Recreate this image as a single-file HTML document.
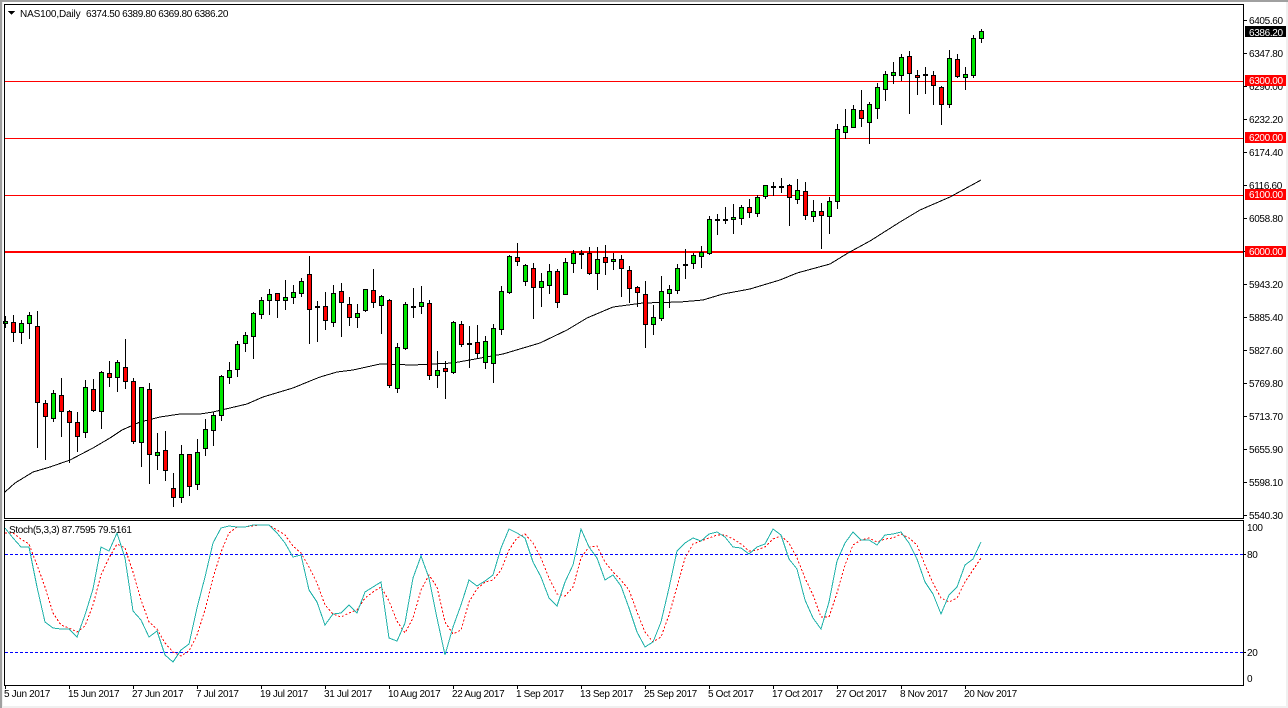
<!DOCTYPE html>
<html><head><meta charset="utf-8"><style>
html,body{margin:0;padding:0;width:1288px;height:708px;overflow:hidden;background:#f0f0f0}
svg{position:absolute;left:0;top:0;display:block}
text{font-family:"Liberation Sans",sans-serif;font-size:10px;letter-spacing:-.35px;fill:#000}
</style></head><body>
<svg id="s" width="1288" height="708" viewBox="0 0 1288 708" xmlns="http://www.w3.org/2000/svg">
<rect x="0" y="0" width="1288" height="708" fill="#f0f0f0"/>
<rect x="3" y="2" width="1283" height="704" fill="#fff"/>
<rect x="0" y="0" width="1288" height="2" fill="#a0a0a0"/>
<rect x="0" y="0" width="2" height="708" fill="#a0a0a0"/>
<g id="g" shape-rendering="crispEdges"></g>
<g shape-rendering="crispEdges">
<rect x="4.5" y="4.5" width="1239" height="514" fill="none" stroke="#000"/>
<rect x="4.5" y="520.5" width="1239" height="165" fill="none" stroke="#000"/>
<path stroke="#000" fill="none" d="M1244 20.5h3M1244 53.5h3M1244 86.5h3M1244 119.5h3M1244 152.5h3M1244 185.5h3M1244 218.5h3M1244 251.5h3M1244 284.5h3M1244 317.5h3M1244 350.5h3M1244 383.5h3M1244 416.5h3M1244 449.5h3M1244 482.5h3M1244 515.5h3M1244 554.5h2M1244 652.5h2M5.5 686v3M69.5 686v3M133.5 686v3M197.5 686v3M261.5 686v3M325.5 686v3M389.5 686v3M453.5 686v3M517.5 686v3M581.5 686v3M645.5 686v3M709.5 686v3M773.5 686v3M837.5 686v3M901.5 686v3M965.5 686v3"/>
<path fill="#000" d="M8 11h7l-3.500 4z"/>
<rect x="1245" y="26" width="41" height="11" fill="#000"/>
</g>
<g>
<text x="20" y="17" style="letter-spacing:-.15px">NAS100,Daily</text>
<text x="86" y="17">6374.50 6389.80 6369.80 6386.20</text>
<text x="9" y="533">Stoch(5,3,3) 87.7595 79.5161</text>
<text x="1249" y="24">6405.60</text>
<text x="1249" y="57">6347.80</text>
<text x="1249" y="90">6290.00</text>
<text x="1249" y="123">6232.20</text>
<text x="1249" y="156">6174.40</text>
<text x="1249" y="189">6116.60</text>
<text x="1249" y="222">6058.80</text>
<text x="1249" y="288">5943.20</text>
<text x="1249" y="321">5885.40</text>
<text x="1249" y="354">5827.60</text>
<text x="1249" y="387">5769.80</text>
<text x="1249" y="420">5713.70</text>
<text x="1249" y="453">5655.90</text>
<text x="1249" y="486">5598.10</text>
<text x="1249" y="519">5540.30</text>
</g>
<g>
<rect x="1245" y="75" width="41" height="11" fill="#f00"/>
<rect x="1245" y="132" width="41" height="11" fill="#f00"/>
<rect x="1245" y="189" width="41" height="11" fill="#f00"/>
<rect x="1245" y="246" width="41" height="11" fill="#f00"/>
<text x="1249" y="36" style="fill:#fff">6386.20</text>
<text x="1249" y="84" style="fill:#fff">6300.00</text>
<text x="1249" y="141" style="fill:#fff">6200.00</text>
<text x="1249" y="198" style="fill:#fff">6100.00</text>
<text x="1249" y="255" style="fill:#fff">6000.00</text>
<text x="1247" y="531">100</text>
<text x="1247" y="558">80</text>
<text x="1247" y="656">20</text>
<text x="1247" y="682">0</text>
<text x="4" y="697">5 Jun 2017</text>
<text x="68" y="697">15 Jun 2017</text>
<text x="132" y="697">27 Jun 2017</text>
<text x="196" y="697">7 Jul 2017</text>
<text x="260" y="697">19 Jul 2017</text>
<text x="324" y="697">31 Jul 2017</text>
<text x="388" y="697">10 Aug 2017</text>
<text x="452" y="697">22 Aug 2017</text>
<text x="516" y="697">1 Sep 2017</text>
<text x="580" y="697">13 Sep 2017</text>
<text x="644" y="697">25 Sep 2017</text>
<text x="708" y="697">5 Oct 2017</text>
<text x="772" y="697">17 Oct 2017</text>
<text x="836" y="697">27 Oct 2017</text>
<text x="900" y="697">8 Nov 2017</text>
<text x="964" y="697">20 Nov 2017</text>
</g>
</svg>
<script>
var c="316,327,321,323,g 315,341,322,332,r 320,343,323,332,g 312,338,315,323,g 311,447,326,402,r 400,459,403,416,r 390,421,393,418,g 378,436,395,411,r 410,462,411,422,r 412,451,422,436,r 380,437,387,432,g 379,411,389,410,r 371,428,372,411,g 361,386,373,377,r 360,391,362,377,g 339,388,367,381,r 378,443,381,441,r 387,466,387,442,g 383,483,389,454,r 433,469,452,455,g 431,480,450,470,r 473,506,488,497,r 445,502,454,497,g 454,495,454,486,r 439,489,452,484,g 419,455,429,448,g 412,445,415,430,g 375,420,376,415,g 362,383,370,377,g 341,376,344,369,g 332,351,335,343,g 312,358,313,336,g 297,318,300,314,g 289,314,294,300,g 293,317,293,300,r 280,309,297,300,g 285,303,292,297,g 278,296,281,293,g 256,343,274,309,r 301,341,306,306,d 292,329,306,320,r 285,326,293,322,g 283,336,291,302,r 297,325,304,317,r 304,327,313,317,g 289,311,289,310,g 269,307,290,302,r 295,333,296,305,g 299,387,300,385,r 343,392,347,388,g 302,349,304,348,g 288,317,306,306,d 286,313,302,306,g 300,379,303,375,r 351,387,370,375,g 361,398,368,371,r 321,373,322,372,g 321,346,324,344,r 326,367,343,343,d 325,358,342,353,r 336,368,341,362,g 324,382,328,363,g 286,334,291,329,g 255,293,256,292,g 243,265,257,261,r 264,285,265,281,g 263,318,268,287,r 273,306,281,287,g 264,293,271,285,g 269,307,271,302,r 258,294,262,294,g 250,272,253,263,g 250,268,253,253,d 247,274,253,273,r 247,289,259,273,g 245,274,257,262,r 253,269,259,261,g 255,296,259,268,r 266,302,270,288,r 286,306,287,292,r 281,347,294,324,r 305,334,317,324,g 276,320,291,318,g 285,307,289,293,g 264,293,268,290,g 249,278,264,264,d 253,268,255,263,g 246,267,252,256,g 216,254,219,253,g 214,234,219,219,d 207,223,219,219,d 204,233,217,219,g 205,224,207,218,g 199,217,207,212,r 195,216,197,213,g 185,198,185,196,g 182,195,186,186,d 178,192,186,186,d 184,225,185,197,r 179,203,190,199,g 182,219,191,215,r 200,221,211,216,g 203,248,211,215,r 197,233,201,216,g 124,208,129,201,g 109,138,126,132,g 105,127,109,127,g 90,126,110,118,r 102,143,104,122,g 83,118,87,108,g 71,100,74,89,g 62,83,72,75,g 54,80,57,75,g 51,113,56,73,r 70,94,75,77,r 67,93,74,75,d 71,104,75,85,r 86,124,87,104,r 50,107,58,104,g 54,77,59,76,r 67,89,74,77,g 35,77,38,75,g 29,42,31,38,g".split(" ");
var o="";
o+='<path fill="#f00" d="M5 251h1238v2H5zM5 138h1238v1H5zM5 81h1238v1H5zM5 195h1238v1H5z"/>';
o+='<path fill="none" stroke="#00f" stroke-dasharray="3 2" d="M5 554.500H1243M5 652.500H1243"/>';
var ma=[5,492,15,483,33,472,50,467,70,460,93,448,110,438,122,430,140,422,160,417,180,414,200,414,213,412,247,404,263,397,293,388,310,381,320,377,337,372,353,370,380,364,413,365,453,363,503,354,540,343,567,330,587,318,613,307,643,303,680,302,703,300,723,294,750,289,780,280,797,273,830,264,848,253,870,241,900,222,920,210,950,197,981,180];
o+='<polyline fill="none" stroke="#000" points="'+ma.join(" ")+'"/>';
c.forEach(function(s,i){
  var x=5+8*i,p=s.split(","),h=+p[0],l=+p[1],t=+p[2],b=+p[3],k=p[4];
  o+='<path stroke="#000" d="M'+(x+.5)+' '+h+'V'+(l+1)+'"/>';
  if(k=="d"){o+='<rect x="'+(x-2)+'" y="'+t+'" width="5" height="2" fill="#000"/>';}
  else{o+='<rect x="'+(x-1.5)+'" y="'+(t+.5)+'" width="4" height="'+(b-t)+'" fill="'+(k=="g"?"#00e600":"#f00")+'" stroke="#000"/>';}
});
var tz=[40,70,95,97,215,320,338,341,343,367,300,222,97,109,55,130,287,316,367,349,421,442,406,388,280,187,85,40,34,37,37,31,31,31,55,85,127,120,225,262,331,298,
295,271,295,231,215,200,370,379,325,190,124,190,310,421,335,270,196,214,198,180,100,43,55,68,140,185,248,273,200,150,43,95,130,195,181,212,280,350,397,382,
320,220,108,85,70,78,57,52,65,97,100,117,97,87,43,60,133,162,256,310,343,260,137,85,52,76,76,91,60,57,52,85,133,200,238,298,240,216,150,133,82];
var rz=[55,55,72,88,150,215,295,330,340,352,332,270,180,130,88,100,170,255,320,343,385,412,422,408,360,285,190,110,55,37,37,34,31,31,45,60,92,115,155,205,270,298,
307,295,285,250,232,215,258,318,355,310,225,180,215,320,358,345,260,222,200,195,165,105,70,58,85,130,190,238,244,215,130,95,92,140,170,195,225,290,350,380,
367,300,215,130,88,78,70,60,60,72,88,107,106,97,73,62,85,130,190,240,305,305,235,150,90,75,70,80,72,68,58,68,90,150,205,250,262,250,200,165,128];
function pts(a){return a.map(function(z,i){return (5+8*i)+" "+Math.round(515+z/3)}).join(" ")}
o+='<polyline fill="none" stroke="#f00" stroke-dasharray="2 2" points="'+pts(rz)+'"/>';
o+='<polyline fill="none" stroke="#20b2aa" points="'+pts(tz)+'"/>';
document.getElementById("g").innerHTML=o;
</script>
</body></html>
